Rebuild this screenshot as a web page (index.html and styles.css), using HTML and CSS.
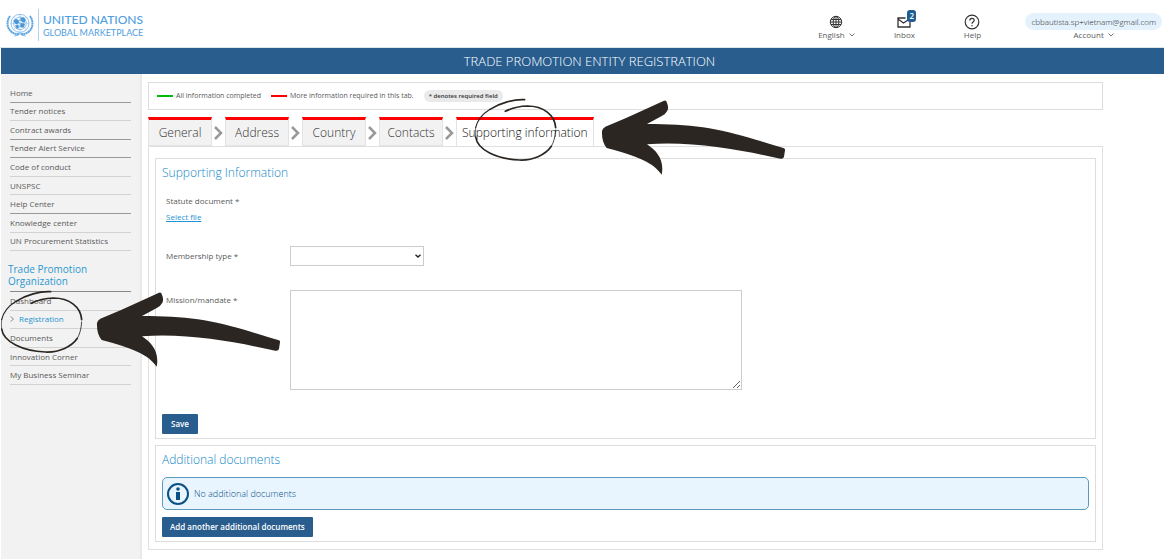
FILE: index.html
```html
<!DOCTYPE html>
<html lang="en">
<head>
<meta charset="utf-8">
<title>Trade Promotion Entity Registration</title>
<link rel="stylesheet" href="styles.css">
</head>
<body>
<svg class="defs" aria-hidden="true">
  <symbol id="arrow" viewBox="480 69 561 234">
    <path fill="#2b2622" d="M672 77Q680 74 681 84Q687 97 682 107Q678 116 664 124L621 147C750 147 830 158 950 195Q1000 210 1032 220Q1036 222 1035 226L1032 245Q1030 253 1021 251C900 225 760 198 621 208C650 227 674 255 665 299C640 263 595 244 500 219C490 208 485 190 486 168Q487 160 496 155L560 128Z"/>
  </symbol>
  <symbol id="ring" viewBox="99 66 255 195">
    <g fill="none" stroke="#2b2622" stroke-linecap="round">
      <path stroke-width="5" d="M254 74C222 72 180 84 150 103"/>
      <path stroke-width="3.500" d="M150 103C126 118 112 136 107 158"/>
      <path stroke-width="2" d="M107 158Q105 172 107 186"/>
      <path stroke-width="5" d="M107 186C112 225 170 252 238 255C280 257 318 238 334 214"/>
      <path stroke-width="2.500" d="M334 214Q345 196 347 165"/>
      <path stroke-width="5" d="M347 158C345 120 310 93 262 93Q225 94 196 109"/>
    </g>
  </symbol>
</svg>
<header class="top">
  <a class="logo" href="#" aria-label="United Nations Global Marketplace">
    <svg class="emblem" viewBox="0 0 84 72" fill="none" stroke="#5aa5e0" aria-hidden="true">
      <g stroke-width="2">
        <circle cx="42" cy="31" r="27"/><circle cx="42" cy="31" r="19"/><circle cx="42" cy="31" r="10"/>
        <path d="M42 4V58M15 31H69M23 12L61 50M61 12L23 50" stroke-width="1.2"/>
      </g>
      <g fill="#4a97d8" stroke="none">
        <path d="M22 24Q28 15 36 20L40 28L34 34L28 32ZM44 14L54 13L59 20L56 29L49 27L43 22ZM46 30L57 33L54 43L46 44L42 37ZM27 37L37 36L39 45L33 48Z"/>
      </g>
      <path stroke-width="6" stroke-dasharray="6 1" d="M12 9C1 24 1 48 20 59Q30 65 39 62M72 9C83 24 83 48 64 59Q54 65 45 62"/>
      <path stroke-width="2.5" d="M25 69Q38 68 44 60M59 69Q46 68 40 60"/>
    </svg>
    <span class="wordmark"><span class="un">UNITED NATIONS</span><span class="gm">GLOBAL MARKETPLACE</span></span>
  </a>
  <nav class="tools" aria-label="Tools">
    <button class="tool tool-lang" type="button">
      <svg class="icon" viewBox="0 0 16 16" fill="none" stroke="#333"><circle cx="8" cy="8" r="5.700"/><ellipse cx="8" cy="8" rx="2.800" ry="5.700"/><path d="M8 2V14M2 8H14M3 5.500H13M3 10.500H13"/></svg>
      <span>English <svg class="caret" viewBox="0 0 6 4"><path d="M0.500 0.500L3 3L5.500 0.500" fill="none" stroke="#555" stroke-width=".8"/></svg></span>
    </button>
    <a class="tool tool-inbox" href="#">
      <span class="mail"><svg class="icon" viewBox="0 0 16 16" fill="none" stroke="#333" stroke-width="1.300"><path d="M9.500 4H2V13H14V8M2 5L7.500 9L12 6"/></svg><b class="badge">2</b></span>
      <span>Inbox</span>
    </a>
    <a class="tool tool-help" href="#">
      <svg class="icon" viewBox="0 0 16 16" fill="none" stroke="#333" stroke-width="1.200"><circle cx="8" cy="8" r="6.800"/><path d="M5.800 6.500C5.800 3.600 10.200 3.600 10.200 6.300C10.200 8 8 8 8 9.800M8 11V12.300"/></svg>
      <span>Help</span>
    </a>
    <button class="tool tool-account" type="button">
      <span class="email">cbbautista.sp+vietnam@gmail.com</span>
      <span>Account <svg class="caret" viewBox="0 0 6 4"><path d="M0.500 0.500L3 3L5.500 0.500" fill="none" stroke="#555" stroke-width=".8"/></svg></span>
    </button>
  </nav>
</header>
<h1 class="banner">TRADE PROMOTION ENTITY REGISTRATION</h1>
<div class="page">
  <nav class="side" aria-label="Main">
    <ul class="menu menu-main">
      <li class="strong"><a href="#">Home</a></li>
      <li><a href="#">Tender notices</a></li>
      <li class="strong"><a href="#">Contract awards</a></li>
      <li class="strong"><a href="#">Tender Alert Service</a></li>
      <li><a href="#">Code of conduct</a></li>
      <li><a href="#">UNSPSC</a></li>
      <li class="strong"><a href="#">Help Center</a></li>
      <li><a href="#">Knowledge center</a></li>
      <li><a href="#">UN Procurement Statistics</a></li>
    </ul>
    <h2 class="side-title">Trade Promotion Organization</h2>
    <ul class="menu menu-org">
      <li><a href="#">Dashboard</a></li>
      <li class="current"><svg class="pointer" viewBox="0 0 4 6"><path d="M.5 .5L3.500 3L.5 5.500" fill="none" stroke="#777" stroke-width=".8"/></svg><a href="#">Registration</a></li>
      <li><a href="#">Documents</a></li>
      <li><a href="#">Innovation Corner</a></li>
      <li><a href="#">My Business Seminar</a></li>
    </ul>
  </nav>
  <main class="main">
    <div class="legend">
      <span class="key key-done">All information completed</span>
      <span class="key key-more">More information required in this tab.</span>
      <span class="pill">* denotes required field</span>
    </div>
    <nav class="tabs" aria-label="Sections">
      <a class="tab" href="#">General</a>
      <svg class="sep" viewBox="0 0 9 14"><path d="M1 1L7 7L1 13" fill="none" stroke="#999" stroke-width="2.500"/></svg>
      <a class="tab" href="#">Address</a>
      <svg class="sep" viewBox="0 0 9 14"><path d="M1 1L7 7L1 13" fill="none" stroke="#999" stroke-width="2.500"/></svg>
      <a class="tab" href="#">Country</a>
      <svg class="sep" viewBox="0 0 9 14"><path d="M1 1L7 7L1 13" fill="none" stroke="#999" stroke-width="2.500"/></svg>
      <a class="tab" href="#">Contacts</a>
      <svg class="sep" viewBox="0 0 9 14"><path d="M1 1L7 7L1 13" fill="none" stroke="#999" stroke-width="2.500"/></svg>
      <a class="tab tab-active" href="#" aria-current="page">Supporting information</a>
    </nav>
    <div class="panel">
      <form class="box">
        <h2 class="title">Supporting Information</h2>
        <div class="statute"><span>Statute document *</span><a class="select-file" href="#">Select file</a></div>
        <div class="field field-type">
          <label for="type">Membership type *</label>
          <span class="select-wrap"><select id="type"><option></option></select><svg class="select-caret" viewBox="0 0 6 4" aria-hidden="true"><path d="M.5 .7L3 3L5.500 .7" fill="none" stroke="#222" stroke-width="1.400"/></svg></span>
        </div>
        <div class="field field-mission">
          <label for="mission">Mission/mandate *</label>
          <textarea id="mission"></textarea>
        </div>
        <button class="btn" type="button">Save</button>
      </form>
      <section class="box">
        <h2 class="title">Additional documents</h2>
        <p class="info"><svg class="info-icon" viewBox="0 0 22 22"><circle cx="11" cy="11" r="10" fill="none" stroke="#0b5186" stroke-width="2"/><circle cx="11" cy="6" r="1.800" fill="#0b5186"/><path d="M9 9H13V17H9Z" fill="#0b5186"/></svg>No additional documents</p>
        <button class="btn" type="button">Add another additional documents</button>
      </section>
    </div>
  </main>
</div>
<svg class="mark ring ring-tab" aria-hidden="true"><use href="#ring"/></svg>
<svg class="mark arrow arrow-tab" aria-hidden="true"><use href="#arrow"/></svg>
<svg class="mark ring ring-menu" aria-hidden="true"><use href="#ring"/></svg>
<svg class="mark arrow arrow-menu" aria-hidden="true"><use href="#arrow"/></svg>
</body>
</html>
```
FILE: styles.css
```css
* { box-sizing: border-box; }
body { margin: 0; position: relative; background: #fff; color: #5a5a5a; font: 8px/12px "Open Sans", sans-serif; overflow-x: hidden; }
a { color: inherit; text-decoration: none; }
button { font: inherit; color: inherit; border: 0; background: none; padding: 0; }
h1, h2, p, ul { margin: 0; padding: 0; }
h1, h2, p { font-weight: 300; }
ul { list-style: none; }
.defs { position: absolute; width: 0; height: 0; }

.top { display: flex; justify-content: space-between; height: 48px; border-bottom: 1px solid #dce6e8; }
.logo { display: flex; align-items: center; gap: 4px; padding: 3px 0 0 6px; }
.emblem { width: 28px; height: 24px; }
.wordmark { display: flex; flex-direction: column; justify-content: center; height: 32px; padding-left: 4px; border-left: 1px solid #aed3f0; color: #4f9edd; font-family: Lato, sans-serif; font-weight: 500; }
.un { font-size: 12px; line-height: 14px; }
.gm { font-size: 9px; line-height: 11px; font-weight: 400; }

.tools { display: flex; padding: 13px 2px 0 0; line-height: 10px; }
.tool { display: flex; flex-direction: column; align-items: center; justify-content: flex-start; white-space: nowrap; }
.tool-lang, .tool-inbox, .tool-help { width: 68px; }
.tool-account { margin-left: 19px; }
.icon { display: block; width: 16px; height: 16px; margin-top: 1px; }
.caret { width: 6px; height: 4px; margin-left: 2px; vertical-align: 1px; }
.mail { position: relative; }
.badge { position: absolute; left: 11px; top: -3px; padding: 0 2px; border-radius: 3px; background: #1f5c91; color: #fff; font-weight: 600; line-height: 12px; }
.email { padding: 0 6px; border-radius: 9px; background: #e4f2fe; color: #222; font-weight: 300; line-height: 17px; }

.banner { margin-left: 1px; padding-left: 14px; background: #285d8e; color: #fff; font-size: 13px; line-height: 26px; text-align: center; }

.page { display: flex; min-height: 483px; padding: 0 61px 0 1px; }
.side { width: 141px; flex: none; padding: 10px 9px 0 9px; background: #f2f2f2; border-right: 2px solid #e9e9e9; }
.menu { display: flex; flex-direction: column; }
.menu-main { min-height: 167px; }
.menu-org { min-height: 94px; border-top: 1px solid #888; }
.menu li { flex: 1; display: flex; align-items: center; border-bottom: 1px solid #d2d2d2; }
.menu .strong { border-bottom-color: #999; }
.menu .current { gap: 5px; color: #1f94cf; }
.pointer { width: 4px; height: 6px; }
.side-title { margin: 12px 0 4px -2px; color: #2c98d0; font-size: 10px; line-height: 12px; font-weight: 400; }

.main { flex: 1; min-width: 0; padding: 8px 0 9px 6px; }
.legend { display: flex; align-items: center; height: 28px; padding-left: 8px; border: 1px solid #ddd; font-size: 7px; }
.key { display: flex; align-items: center; gap: 3px; margin-right: 10px; }
.key::before { content: ""; width: 16px; height: 2px; background: #00b90c; }
.key-more::before { background: #f00; }
.pill { padding: 0 5px; border-radius: 6px; background: #eaeaea; color: #333; font-size: 6px; font-weight: 600; }

.tabs { display: flex; align-items: center; gap: 2px; margin-top: 7px; }
.tab { min-width: 64px; padding: 0 5px; border: 1px solid #e3e3e3; border-top: 3px solid #f00; background: #f2f2f2; color: #333; font-size: 12px; font-weight: 300; line-height: 25px; text-align: center; }
.tab-active { align-self: flex-start; margin-bottom: -1px; padding-bottom: 1px; background: #fff; color: #111; border-bottom: 0; z-index: 1; }
.sep { width: 9px; height: 14px; flex: none; margin-top: 3px; }

.panel { display: flex; flex-direction: column; gap: 6px; padding: 11px 6px 7px; border: 1px solid #e0e0e0; }
.box { padding: 4px 6px; border: 1px solid #ddd; }
.title { color: #1088c8; font-size: 12px; line-height: 20px; }
.statute { display: flex; flex-direction: column; gap: 4px; padding: 12px 4px 0; }
.select-file { align-self: flex-start; color: #1f94cf; text-decoration: underline; }
.field { display: grid; grid-template-columns: 124px 1fr; padding-left: 4px; }
.field-type { align-items: center; margin-top: 23px; }
.field-mission { margin-top: 24px; }
.field-mission label { padding-top: 4px; }
.select-wrap { position: relative; display: flex; width: 134px; }
.select-caret { position: absolute; right: 3px; top: 8px; width: 6px; height: 4px; pointer-events: none; }
select { appearance: none; width: 100%; height: 20px; border: 1px solid #ccc; border-radius: 0; background: #fff; font: 8px "Open Sans", sans-serif; }
textarea { display: block; width: 452px; max-width: 100%; height: 100px; border: 1px solid #ccc; font: 8px "Open Sans", sans-serif; }
.btn { padding: 0 8px; border-radius: 1px; background: #285d8e; color: #fff; font-weight: 600; line-height: 20px; }
.field-mission + .btn { margin-top: 24px; padding: 0 9px; }
.info { display: flex; align-items: center; gap: 5px; margin: 7px 0; min-height: 33px; padding: 0 4px; border: 1px solid #5d99bd; border-radius: 5px; background: #e8f5fe; color: #0b5186; font-size: 9px; }
.info-icon { width: 22px; height: 22px; }

.mark { position: absolute; pointer-events: none; z-index: 2; }
.ring { width: 85px; height: 65px; }
.arrow { width: 187px; height: 78px; }
.ring-tab { left: 473px; top: 97px; }
.arrow-tab { left: 600px; top: 98px; }
.ring-menu { left: -1px; top: 289px; }
.arrow-menu { left: 95px; top: 290px; }
```
